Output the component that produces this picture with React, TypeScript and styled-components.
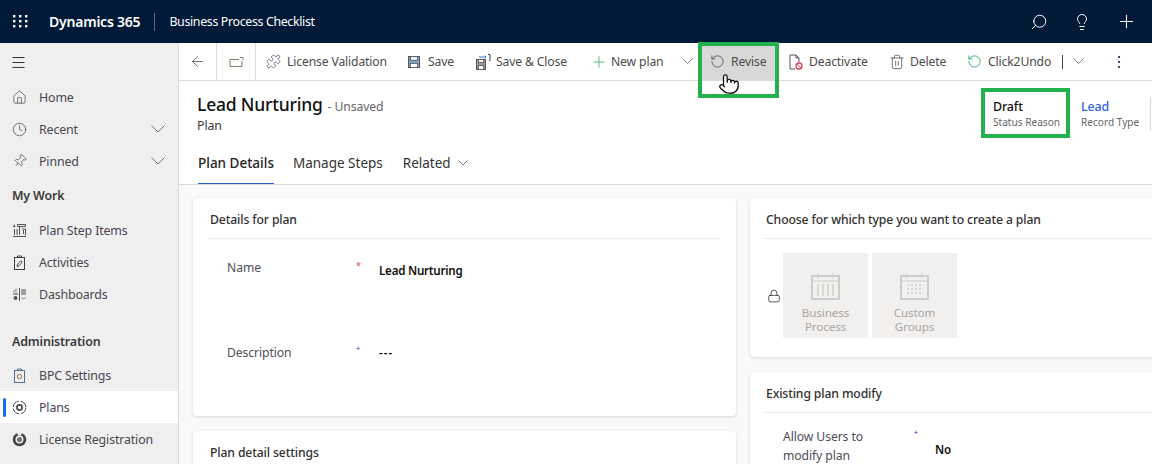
import React from "react";
import styled, { createGlobalStyle } from "styled-components";
import { Search, Lightbulb, Plus, ArrowLeft, Menu, House, Clock, Pin, Trash2, Lock, RotateCcw, Pointer, Puzzle } from "lucide-react";

const GlobalStyle = createGlobalStyle`
  html, body { margin: 0; padding: 0; height: 100%; overflow: hidden; }
  body { font-family: "Noto Sans", "Open Sans", sans-serif; font-size: 13px; color: #323130; background: #fff; }
  #root { height: 100%; }
`;

const Page = styled.div`
  width: 1152px;
  height: 464px;
  display: flex;
  flex-direction: column;
  position: relative;
  overflow: hidden;
`;

const TopBar = styled.header`
  height: 43px;
  flex: none;
  background: #001a38;
  color: #fff;
  display: flex;
  align-items: center;
  padding-left: 13px;
`;

const Waffle = styled.svg`
  width: 15px;
  height: 13px;
  margin-right: 21px;
`;

const Brand = styled.span`
  font-size: 14px;
  font-weight: 600;
  letter-spacing: -0.22px;
  padding-right: 14px;
  border-right: 1px solid #5a6a80;
  line-height: 18px;
`;

const AppName = styled.span`
  font-size: 12.4px;
  margin-left: 14px;
  letter-spacing: -0.35px;
`;

const TopIcons = styled.div`
  margin-left: auto;
  display: flex;
  align-items: center;
  gap: 25px;
  padding-right: 15px;
`;

const Body = styled.div`
  flex: 1;
  display: flex;
  min-height: 0;
`;

const Sidebar = styled.nav`
  width: 178px;
  flex: none;
  background: #efefef;
  border-right: 1px solid #d9d9d9;
  display: flex;
  flex-direction: column;
`;

const Burger = styled.div`
  height: 38px;
  display: flex;
  align-items: center;
  padding-left: 10px;
  color: #111;
`;

const NavRow = styled.div<{ $active?: boolean }>`
  height: 32px;
  flex: none;
  display: flex;
  align-items: center;
  position: relative;
  padding-left: 12px;
  gap: 12px;
  font-size: 12.4px;
  letter-spacing: -0.15px;
  color: #4a4650;
  background: ${(p) => (p.$active ? "#fff" : "transparent")};
  ${(p) =>
    p.$active &&
    `&::before { content: ""; position: absolute; left: 3px; top: 7px; bottom: 6px; width: 3px; border-radius: 2px; background: #1a6cf0; }`}
`;

const NavIcon = styled.span`
  width: 15px;
  height: 15px;
  display: flex;
  align-items: center;
  justify-content: center;
  color: #3f3f44;
  flex: none;
`;

const NavChevron = styled.span`
  margin-left: auto;
  margin-right: 13px;
  display: flex;
  color: #66666a;
`;

const NavGroup = styled.div<{ $top: number; $bottom: number }>`
  font-size: 12.4px;
  font-weight: 600;
  letter-spacing: -0.15px;
  color: #3b3a39;
  height: 32px;
  flex: none;
  display: flex;
  align-items: center;
  padding-left: 12px;
  margin-top: ${(p) => p.$top}px;
  margin-bottom: ${(p) => p.$bottom}px;
`;

const Main = styled.main`
  flex: 1;
  min-width: 0;
  display: flex;
  flex-direction: column;
`;

const CommandBar = styled.div`
  height: 37px;
  flex: none;
  display: flex;
  align-items: center;
  border-bottom: 1px solid #dcdcdc;
  background: #fff;
  font-size: 12.2px;
  letter-spacing: -0.15px;
  color: #4d4b49;
`;

const IconCell = styled.div<{ $w: number }>`
  width: ${(p) => p.$w}px;
  height: 37px;
  flex: none;
  display: flex;
  align-items: center;
  justify-content: center;
  border-right: 1px solid #dcdcdc;
  color: #3a3a3a;
`;

const Cmd = styled.div<{ $w: number; $hover?: boolean; $left?: number; $right?: number }>`
  width: ${(p) => p.$w}px;
  height: 37px;
  flex: none;
  display: flex;
  align-items: center;
  padding-left: 8px;
  margin-left: ${(p) => p.$left ?? 0}px;
  margin-right: ${(p) => p.$right ?? 0}px;
  box-sizing: border-box;
  white-space: nowrap;
  background: ${(p) => (p.$hover ? "#d8d8d8" : "transparent")};
`;

const CmdIcon = styled.span<{ $color?: string }>`
  width: 21px;
  height: 16px;
  flex: none;
  display: flex;
  align-items: center;
  color: ${(p) => p.$color ?? "#333"};
`;

const CmdSeparator = styled.div`
  width: 1px;
  height: 14px;
  background: #444;
  flex: none;
`;

const Kebab = styled.div`
  display: flex;
  flex-direction: column;
  gap: 3px;
  margin-left: 20px;
  i { width: 2px; height: 2px; background: #3a4a6a; display: block; }
`;

const FormHead = styled.div`
  height: 103px;
  flex: none;
  display: flex;
  flex-direction: column;
  border-bottom: 1px solid #d9d9d9;
  background: #fff;
  position: relative;
`;

const TitleBlock = styled.div`
  padding: 11px 0 0 18px;
  height: 52px;
  box-sizing: border-box;
`;

const Title = styled.div`
  display: flex;
  align-items: baseline;
  gap: 5px;
  line-height: 25px;
  font-size: 17.5px;
  font-weight: 500;
  letter-spacing: -0.2px;
  color: #111;
  span { font-size: 12.2px; font-weight: 400; color: #666; letter-spacing: -0.1px; }
`;

const Entity = styled.div`
  font-size: 12.4px;
  color: #3c3c3c;
  line-height: 14px;
  letter-spacing: -0.1px;
`;

const Headers = styled.div`
  position: absolute;
  right: 0;
  top: 17px;
  display: flex;
  width: 159px;
  height: 40px;
`;

const HeaderField = styled.div<{ $w: number; $link?: boolean }>`
  width: ${(p) => p.$w}px;
  flex: none;
  display: flex;
  flex-direction: column;
  b {
    font-size: 12.4px;
    font-weight: 500;
    line-height: 17px;
    letter-spacing: -0.1px;
    color: ${(p) => (p.$link ? "#2d5fe0" : "#111")};
  }
  small { font-size: 10.1px; color: #666; line-height: 14px; white-space: nowrap; }
`;

const HeaderDivider = styled.div`
  width: 1px;
  height: 34px;
  background: #d8d8d8;
  margin-top: -1px;
  margin-left: 10px;
`;

const Tabs = styled.div`
  display: flex;
  gap: 19px;
  padding-left: 19px;
  height: 51px;
  font-size: 13.5px;
`;

const Tab = styled.div<{ $active?: boolean }>`
  display: flex;
  align-items: center;
  gap: 7px;
  height: 100%;
  box-sizing: border-box;
  padding-top: 10px;
  color: ${(p) => (p.$active ? "#242424" : "#333")};
  font-weight: ${(p) => (p.$active ? 500 : 400)};
  border-bottom: 1px solid ${(p) => (p.$active ? "#2266c8" : "transparent")};
  margin-bottom: -1px;
  &:last-child { margin-left: 1px; }
  svg { color: #666; }
`;

const Content = styled.div`
  flex: 1;
  min-height: 0;
  background: #faf9f8;
  padding: 13px 0 0 14px;
  display: grid;
  grid-template-columns: 543px 420px;
  column-gap: 14px;
  overflow: hidden;
`;

const Column = styled.div`
  display: flex;
  flex-direction: column;
  gap: 15px;
`;

const Card = styled.section<{ $h: number; $indent: number }>`
  height: ${(p) => p.$h}px;
  flex: none;
  background: #fff;
  border-radius: 4px;
  box-shadow: 0 1px 3px rgba(0, 0, 0, 0.14);
  padding: 0 16px 0 ${(p) => p.$indent}px;
`;

const CardTitle = styled.h3`
  margin: 0;
  height: 41px;
  box-sizing: border-box;
  padding: 13px 0 0 2px;
  font-size: 12.2px;
  line-height: 17px;
  font-weight: 500;
  letter-spacing: -0.12px;
  color: #323130;
  border-bottom: 1px solid #ececec;
`;

const Field = styled.div<{ $top: number; $cols?: string }>`
  display: grid;
  grid-template-columns: ${(p) => p.$cols ?? "130px 22px 1fr"};
  min-height: 20px;
  margin-top: ${(p) => p.$top}px;
  padding-left: 19px;
  font-size: 12.2px;
  letter-spacing: -0.1px;
  color: #504c58;
  line-height: 19px;
`;

const Req = styled.span<{ $c: string; $size: number; $shift: number }>`
  color: ${(p) => p.$c};
  font-size: ${(p) => p.$size}px;
  line-height: 8px;
  margin-top: ${(p) => p.$shift}px;
  margin-left: -1px;
`;

const Value = styled.span<{ $top?: number; $spaced?: boolean }>`
  font-size: 11.6px;
  font-weight: 600;
  color: #111;
  letter-spacing: ${(p) => (p.$spaced ? "1px" : "-0.24px")};
  padding-top: ${(p) => p.$top ?? 3}px;
`;

const TileRow = styled.div`
  display: flex;
  align-items: center;
  gap: 4px;
  padding: 14px 0 0 3px;
  color: #2a2a34;
`;

const Tile = styled.div`
  width: 85px;
  height: 85px;
  background: #f2f0ee;
  display: flex;
  flex-direction: column;
  align-items: center;
  padding-top: 19px;
  box-sizing: border-box;
  font-size: 11.6px;
  line-height: 14px;
  color: #a8a6a4;
  text-align: center;
  letter-spacing: -0.1px;
  svg { margin-bottom: 6px; }
`;

const Highlight = styled.div<{ $l: number; $t: number; $w: number; $h: number }>`
  position: absolute;
  left: ${(p) => p.$l}px;
  top: ${(p) => p.$t}px;
  width: ${(p) => p.$w}px;
  height: ${(p) => p.$h}px;
  box-sizing: border-box;
  border: 4px solid #22b14c;
  pointer-events: none;
`;

const MouseCursor = styled.div`
  position: absolute;
  left: 718px;
  top: 73px;
  color: #111;
  display: flex;
`;

const line = { fill: "none", stroke: "currentColor", strokeWidth: 1 };

function Chevron({ w = 11 }: { w?: number }) {
  return (
    <svg width={w} height={w / 2 + 1} viewBox={`0 0 ${w} ${w / 2 + 1}`} fill="none" stroke="currentColor" strokeWidth="0.9">
      <path d={`M0.5 0.5L${w / 2} ${w / 2}L${w - 0.5} 0.5`} />
    </svg>
  );
}

function CalendarIcon({ dots }: { dots?: boolean }) {
  return (
    <svg width="30" height="28" viewBox="0 0 30 28" style={{ color: "#cfcdcb" }}>
      <rect x="1" y="4" width="27" height="23" {...line} strokeWidth={2} />
      <path d="M1 9h27M7 1v5M22 1v5" {...line} />
      {dots ? (
        <path d="M7 13h16M7 17h16M7 21h16" {...line} strokeWidth={1.5} strokeDasharray="2 2" />
      ) : (
        <path d="M7 12v12M12 12v12M17 12v12M22 12v12" {...line} strokeWidth={1.4} />
      )}
    </svg>
  );
}

function SaveIcon() {
  return (
    <svg width="14" height="14" viewBox="0 0 14 14">
      <rect x="1.5" y="1.5" width="11" height="11" fill="#7fa3c7" stroke="#555" />
      <rect x="3.5" y="1.5" width="7" height="4" fill="#e4ecf4" stroke="#555" strokeWidth="0.8" />
      <rect x="3.5" y="8.5" width="7" height="4" fill="#fff" stroke="#555" strokeWidth="0.8" />
    </svg>
  );
}

function SaveCloseIcon() {
  return (
    <svg width="16" height="16" viewBox="0 0 16 16">
      <rect x="1.5" y="5.5" width="9" height="10" fill="#9a9a9a" stroke="#555" />
      <rect x="3.5" y="5.5" width="5" height="3" fill="#fff" stroke="#555" strokeWidth="0.8" />
      <rect x="3.5" y="11.5" width="5" height="4" fill="#fff" stroke="#555" strokeWidth="0.8" />
      <path d="M4 3h7M9.5 1.5L11 3 9.5 4.5" fill="none" stroke="#2b7cd3" />
      <path d="M13 0.5h2v6h-1" fill="none" stroke="#444" />
    </svg>
  );
}

function StepItemsIcon() {
  return (
    <svg width="15" height="15" viewBox="0 0 15 15" fill="none" stroke="currentColor" strokeWidth="0.9">
      <path d="M1 3.5h2.5M2.2 1.5v2M5.5 1.5h8v2h-8zM2.5 6v6M5 6v6M7.5 3.5v8.5M10 6h3.5v6M11.5 7v4M1 13.5h13" />
    </svg>
  );
}

function ActivitiesIcon() {
  return (
    <svg width="15" height="15" viewBox="0 0 15 15" fill="none" stroke="currentColor">
      <rect x="2.5" y="2.5" width="10" height="12" />
      <path d="M5.5 2.5V1h4v1.5" />
      <path d="M5 11.5l.7-2.5 3.3-3.3 1.3 1.3L7 10.8z" strokeWidth="0.9" />
    </svg>
  );
}

function DashboardsIcon() {
  return (
    <svg width="15" height="15" viewBox="0 0 15 15" fill="none" stroke="currentColor">
      <path d="M1 7h5M9 7h5M7.5 1v13M9 3h5M9 5h5" strokeWidth="0.9" />
      <path d="M2 5.5V3M4 5.5V1.5M9.5 10.5a2.2 2.2 0 0 0 4 0" stroke="#6f7d96" />
      <circle cx="3.5" cy="11" r="2" fill="#55555a" stroke="none" />
    </svg>
  );
}

function SettingsIcon() {
  return (
    <svg width="15" height="15" viewBox="0 0 15 15" fill="none" stroke="#52708f">
      <rect x="2.5" y="2.5" width="10" height="12" />
      <path d="M5.5 2.5V1h4v1.5" />
      <circle cx="7.5" cy="8.5" r="2.2" stroke="#9a6a3c" />
    </svg>
  );
}

function PlansIcon() {
  return (
    <svg width="15" height="15" viewBox="0 0 15 15" fill="none" stroke="#4a4a4a">
      <circle cx="7.5" cy="7.5" r="6.3" strokeDasharray="8 2" />
      <circle cx="7.5" cy="7.5" r="2.6" strokeWidth="1.7" />
    </svg>
  );
}

function LicenseIcon() {
  return (
    <svg width="15" height="15" viewBox="0 0 15 15">
      <circle cx="7.5" cy="7.5" r="6.8" fill="#454545" />
      <circle cx="7.5" cy="7.5" r="4" fill="#efefef" />
      <path d="M5 0.5h5l-1 3h-3z" fill="#efefef" />
      <circle cx="7.5" cy="7.5" r="2.6" fill="#777" />
    </svg>
  );
}

export default function App() {
  return (
    <Page>
      <GlobalStyle />
      <TopBar>
        <Waffle viewBox="0 0 15 13" fill="#fff">
          {[0, 5, 10].flatMap((y) =>
            [0, 6, 12].map((x) => <rect key={`${x}-${y}`} x={x} y={y} width="2.4" height="2.4" />)
          )}
        </Waffle>
        <Brand>Dynamics 365</Brand>
        <AppName>Business Process Checklist</AppName>
        <TopIcons>
          <Search size={18} strokeWidth={1.3} style={{ transform: "scaleX(-1)" }} />
          <Lightbulb size={18} strokeWidth={1.3} />
          <Plus size={21} strokeWidth={1.2} />
        </TopIcons>
      </TopBar>
      <Body>
        <Sidebar>
          <Burger><Menu size={17} strokeWidth={1.2} /></Burger>
          <NavRow><NavIcon><House size={15} strokeWidth={1.1} /></NavIcon>Home</NavRow>
          <NavRow>
            <NavIcon><Clock size={15} strokeWidth={1.1} /></NavIcon>Recent
            <NavChevron><Chevron w={14} /></NavChevron>
          </NavRow>
          <NavRow>
            <NavIcon><Pin size={14} strokeWidth={1.1} style={{ transform: "rotate(40deg)" }} /></NavIcon>Pinned
            <NavChevron><Chevron w={14} /></NavChevron>
          </NavRow>
          <NavGroup $top={2} $bottom={3}>My Work</NavGroup>
          <NavRow><NavIcon><StepItemsIcon /></NavIcon>Plan Step Items</NavRow>
          <NavRow><NavIcon><ActivitiesIcon /></NavIcon>Activities</NavRow>
          <NavRow><NavIcon><DashboardsIcon /></NavIcon>Dashboards</NavRow>
          <NavGroup $top={15} $bottom={2}>Administration</NavGroup>
          <NavRow><NavIcon><SettingsIcon /></NavIcon>BPC Settings</NavRow>
          <NavRow $active><NavIcon><PlansIcon /></NavIcon>Plans</NavRow>
          <NavRow><NavIcon><LicenseIcon /></NavIcon>License Registration</NavRow>
        </Sidebar>
        <Main>
          <CommandBar>
            <IconCell $w={37}><ArrowLeft size={17} strokeWidth={1} /></IconCell>
            <IconCell $w={38}>
              <svg width="15" height="12" viewBox="0 0 15 12" fill="none" stroke="#8a7a68"><path d="M1 3.5h9M1 3.5v7h12V5M11 1.5h3v2.5" /></svg>
            </IconCell>
            <Cmd $w={141} $left={2}><CmdIcon><Puzzle size={15} strokeWidth={1} /></CmdIcon>License Validation</Cmd>
            <Cmd $w={68}><CmdIcon><SaveIcon /></CmdIcon>Save</Cmd>
            <Cmd $w={115}><CmdIcon><SaveCloseIcon /></CmdIcon>Save &amp; Close</Cmd>
            <Cmd $w={92}><CmdIcon><Plus size={18} strokeWidth={1.2} color="#4fb37a" /></CmdIcon>New plan</Cmd>
            <Cmd $w={28}><CmdIcon $color="#777"><Chevron /></CmdIcon></Cmd>
            <Cmd $w={73} $right={5} $hover><CmdIcon><RotateCcw size={15} strokeWidth={1.1} /></CmdIcon>Revise</Cmd>
            <Cmd $w={101}>
              <CmdIcon>
                <svg width="15" height="16" viewBox="0 0 15 16" fill="none" stroke="#555"><path d="M2 1h6l3 3v4M8 1v3h3M2 1v14h5" /><circle cx="11" cy="12" r="3" stroke="#e0405a" strokeWidth="1.3" /><path d="M9 10l4 4" stroke="#e0405a" /></svg>
              </CmdIcon>
              Deactivate
            </Cmd>
            <Cmd $w={78}><CmdIcon><Trash2 size={16} strokeWidth={1} /></CmdIcon>Delete</Cmd>
            <Cmd $w={103}><CmdIcon><RotateCcw size={15} strokeWidth={1.5} color="#2eab6a" /></CmdIcon>Click2Undo</Cmd>
            <CmdSeparator />
            <Cmd $w={33} $left={2}><CmdIcon $color="#777"><Chevron /></CmdIcon></Cmd>
            <Kebab><i /><i /><i /></Kebab>
          </CommandBar>
          <FormHead>
            <TitleBlock>
              <Title>Lead Nurturing<span>- Unsaved</span></Title>
              <Entity>Plan</Entity>
            </TitleBlock>
            <Headers>
              <HeaderField $w={88}><b>Draft</b><small>Status Reason</small></HeaderField>
              <HeaderField $w={59} $link><b>Lead</b><small>Record Type</small></HeaderField>
              <HeaderDivider />
            </Headers>
            <Tabs>
              <Tab $active>Plan Details</Tab>
              <Tab>Manage Steps</Tab>
              <Tab>Related <Chevron w={10} /></Tab>
            </Tabs>
          </FormHead>
          <Content>
            <Column>
              <Card $h={218} $indent={15}>
                <CardTitle>Details for plan</CardTitle>
                <Field $top={19}>
                  <span>Name</span>
                  <Req $c="#e0463c" $size={9} $shift={4}>*</Req>
                  <Value>Lead Nurturing</Value>
                </Field>
                <Field $top={63}>
                  <span>Description</span>
                  <Req $c="#1515d0" $size={7} $shift={2}>+</Req>
                  <Value $top={0} $spaced>---</Value>
                </Field>
              </Card>
              <Card $h={80} $indent={15}>
                <CardTitle>Plan detail settings</CardTitle>
              </Card>
            </Column>
            <Column>
              <Card $h={159} $indent={14}>
                <CardTitle>Choose for which type you want to create a plan</CardTitle>
                <TileRow>
                  <Lock size={14} strokeWidth={1.3} style={{ marginRight: -2 }} />
                  <Tile><CalendarIcon />Business<br />Process</Tile>
                  <Tile><CalendarIcon dots />Custom<br />Groups</Tile>
                </TileRow>
              </Card>
              <Card $h={120} $indent={14}>
                <CardTitle>Existing plan modify</CardTitle>
                <Field $top={14} $cols="132px 20px 1fr">
                  <span>Allow Users to<br />modify plan</span>
                  <Req $c="#1515d0" $size={7} $shift={2}>+</Req>
                  <Value $top={13}>No</Value>
                </Field>
              </Card>
            </Column>
          </Content>
        </Main>
      </Body>
      <Highlight $l={698} $t={42} $w={81} $h={56} />
      <Highlight $l={981} $t={88} $w={89} $h={50} />
      <MouseCursor>
        <Pointer size={22} strokeWidth={1.4} fill="#fff" />
      </MouseCursor>
    </Page>
  );
}
